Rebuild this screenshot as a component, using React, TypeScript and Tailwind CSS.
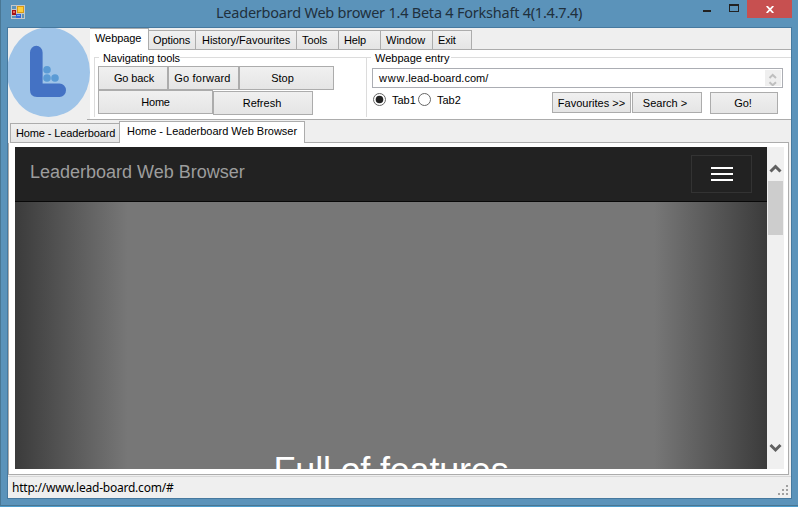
import type { ReactNode } from "react";

const face = "border border-[#acacac] bg-linear-to-b from-[#f0f0f0] to-[#e5e5e5]";

function Button({ className, children }: { className: string; children: ReactNode }) {
  return (
    <button className={`${face} flex shrink-0 items-center justify-center whitespace-nowrap ${className}`}>
      {children}
    </button>
  );
}

function MenuTab({ className, children }: { className: string; children: ReactNode }) {
  return (
    <div className={`${face} flex h-5 shrink-0 items-center border-l-0 whitespace-nowrap ${className}`}>
      {children}
    </div>
  );
}

function TitleBar() {
  return (
    <header className="flex h-[27px] shrink-0 items-start">
      <svg className="mt-[5px] ml-[10px] shrink-0" width="14" height="14" viewBox="0 0 14 14" shapeRendering="crispEdges">
        <rect width="14" height="14" fill="#c5c8c8" />
        <path d="M1 1h4v3H1zM1 11h4v2H1zM11 9h2v4h-2z" fill="#5b93ba" />
        <rect x="6" y="1" width="7" height="7" fill="#d99a14" />
        <rect x="7" y="2" width="5" height="5" fill="#ffce3c" />
        <rect x="1" y="5" width="4" height="5" fill="#a51316" />
        <rect x="2" y="6" width="2" height="2" fill="#e86a58" />
        <rect x="5" y="9" width="5" height="4" fill="#3465d8" />
        <rect x="6" y="10" width="3" height="1" fill="#82a8fa" />
      </svg>
      <h1 className="ml-[191px] w-[370px] shrink-0 font-['Noto_Sans','Open_Sans',sans-serif] text-[14.5px] leading-[25px] tracking-[-0.23px] whitespace-nowrap text-[#1f303d]">
        Leaderboard Web brower 1.4 Beta 4 Forkshaft 4(1.4.7.4)
      </h1>
      <div className="mt-2.5 ml-[117px] h-0.5 w-2 shrink-0 bg-[#222]" />
      <div className="mt-1 ml-[18px] h-2 w-2.5 shrink-0 border border-t-2 border-[#222]" />
      <div className="ml-2 flex h-[18px] w-[45px] shrink-0 items-center justify-center bg-[#c75050]">
        <svg width="8" height="7" viewBox="0 0 8 7">
          <path d="M.7 0 7.3 7M7.3 0 .7 7" stroke="white" strokeWidth="1.8" />
        </svg>
      </div>
    </header>
  );
}

function Logo() {
  return (
    <svg className="shrink-0" width="82" height="91" viewBox="0 0 82 91">
      <ellipse cx="40.5" cy="44.2" rx="41.5" ry="44.8" fill="#9fc4e8" />
      <path
        d="M22 24.5a6.3 6.8 0 0 1 12.6 0V55.5H51.500a6.500 6.800 0 0 1 0 13.600H29q-7 0-7-7z"
        fill="#4472c4"
      />
      <circle cx="39" cy="41.700" r="3.800" fill="#5b9bd5" />
      <circle cx="39" cy="50" r="3.800" fill="#5b9bd5" />
      <circle cx="47" cy="50" r="3.800" fill="#5b9bd5" />
    </svg>
  );
}

function Legend({ className, children }: { className: string; children: ReactNode }) {
  return (
    <div className="flex h-3 items-center whitespace-nowrap">
      <div className="-mt-0.5 h-px w-[5px] shrink-0 bg-[#dcdcdc]" />
      <span className={`shrink-0 pl-1 ${className}`}>{children}</span>
      <div className="-mt-0.5 h-px grow bg-[#dcdcdc]" />
    </div>
  );
}

function Radio({ checked, label, className }: { checked?: boolean; label: string; className: string }) {
  return (
    <label className={`flex shrink-0 items-center ${className}`}>
      <svg className="mr-1.5 shrink-0" width="14" height="14" viewBox="0 0 14 14">
        <circle cx="7.5" cy="6.5" r="6" fill="white" stroke="#666" />
        {checked && <circle cx="7.5" cy="6.5" r="3.8" fill="#222" />}
      </svg>
      {label}
    </label>
  );
}

function Toolbar() {
  return (
    <div className="flex h-[93px] shrink-0">
      <Logo />
      <div className="flex min-w-0 grow flex-col">
        <nav className="flex h-[22px] shrink-0 items-end">
          <div className="flex h-[22px] w-[59px] shrink-0 items-start border-t border-r border-[#acacac] bg-white pt-px pl-[5px] tracking-[-0.08px]">Webpage</div>
          <MenuTab className="w-[47px] pl-1 tracking-[-0.1px]">Options</MenuTab>
          <MenuTab className="w-[101px] pl-1.5 tracking-[-0.02px]">History/Favourites</MenuTab>
          <MenuTab className="w-[42px] pl-[5px] tracking-[-0.1px]">Tools</MenuTab>
          <MenuTab className="w-[42px] pl-[5px] tracking-[-0.2px]">Help</MenuTab>
          <MenuTab className="w-[52px] pl-[5px]">Window</MenuTab>
          <MenuTab className="w-[39px] pl-[5px] tracking-[-0.2px]">Exit</MenuTab>
          <div className="h-px grow bg-[#acacac]" />
        </nav>
        <div className="flex h-[69px] bg-white">
          <section className="ml-1 flex w-[272px] shrink-0 flex-col pt-0.5">
            <Legend className="w-[80px] tracking-[-0.08px]">Navigating tools</Legend>
            <div className="-mt-[7px] flex h-[60px] shrink-0 flex-col border-l border-[#dcdcdc] pt-[9px] pl-[3px]">
              <div className="flex shrink-0">
                <Button className="h-6 w-[70px] pl-0.5 tracking-[-0.12px]">Go back</Button>
                <Button className="h-6 w-[71px] pr-0.5 tracking-[0.2px]">Go forward</Button>
                <Button className="h-6 w-[95px] pr-2">Stop</Button>
              </div>
              <div className="flex shrink-0">
                <Button className="h-6 w-[115px] tracking-[-0.2px]">Home</Button>
                <Button className="mt-px h-6 w-[100px] pr-0.5">Refresh</Button>
              </div>
            </div>
          </section>
          <section className="flex min-w-0 grow flex-col pt-0.5">
            <Legend className="w-[80px]">Webpage entry</Legend>
            <div className="-mt-[7px] h-[60px] shrink-0 border-l border-[#dcdcdc] pt-[11px] pl-[5px]">
              <div className="flex h-5 w-[411px] items-center justify-between border border-[#abadb3] bg-white pr-px pl-1.5">
                <span className="tracking-[0.04px]"><span className="tracking-[0.8px]">www</span>.lead-board.com/</span>
                <svg width="16" height="16" viewBox="0 0 16 16">
                  <rect width="16" height="16" fill="#efefef" />
                  <path d="m4.5 8 3.2-3.1L11 8M4.5 12.2l3.2 3L11 12.2" fill="none" stroke="#bfbfbf" strokeWidth="2" />
                </svg>
              </div>
              <div className="flex items-start pt-1">
                <Radio checked label="Tab1" className="h-4 w-[45px]" />
                <Radio label="Tab2" className="h-4 w-[45px]" />
                <Button className="ml-[90px] h-[21px] w-[79px]">Favourites &gt;&gt;</Button>
                <Button className="ml-px h-[21px] w-[70px] pr-1">Search &gt;</Button>
                <Button className="ml-2 h-[22px] w-[68px] pr-0.5">Go!</Button>
              </div>
            </div>
          </section>
        </div>
        <div className="-ml-[3px] h-px shrink-0 bg-[#acacac]" />
      </div>
    </div>
  );
}

function WebPage() {
  return (
    <div className="flex h-[322px] w-[752px] shrink-0 flex-col overflow-hidden">
      <div className="flex h-[55px] shrink-0 items-start justify-between border-b border-[#080808] bg-[#222] pt-2 pr-[15px] pl-[15px]">
        <span className="text-[18px] leading-[34px] text-[#9d9d9d]">Leaderboard Web Browser</span>
        <div className="flex h-[38px] w-[61px] flex-col items-center justify-center gap-1 border border-[#333]">
          <div className="h-0.5 w-[22px] bg-white" />
          <div className="h-0.5 w-[22px] bg-white" />
          <div className="h-0.5 w-[22px] bg-white" />
        </div>
      </div>
      <main className="h-[267px] shrink-0 overflow-hidden bg-[linear-gradient(to_right,#3b3b3b,#777_15%,#777_85%,#3b3b3b)] pt-[249px] text-center text-[36px] leading-[40px] tracking-[-0.2px] whitespace-nowrap text-white">
        Full of features
      </main>
    </div>
  );
}

function ScrollBar() {
  return (
    <div className="flex h-[322px] w-[17px] shrink-0 flex-col items-center bg-[#f0f0f0]">
      <svg className="mt-4 shrink-0" width="13" height="18" viewBox="0 0 13 18">
        <path d="m1.500 8.500 5-5 5 5" fill="none" stroke="#606060" strokeWidth="3" />
      </svg>
      <div className="h-[54px] w-[15px] shrink-0 bg-[#cdcdcd]" />
      <div className="grow" />
      <svg className="mb-4 shrink-0" width="13" height="10" viewBox="0 0 13 10">
        <path d="m1.500 2 5 5 5-5" fill="none" stroke="#606060" strokeWidth="3" />
      </svg>
    </div>
  );
}

function StatusBar() {
  return (
    <footer className="mt-px flex h-[22px] shrink-0 items-end justify-between border-t border-[#d7d7d7] pr-0.5 pl-1">
      <span className="font-['Noto_Sans','Open_Sans',sans-serif] text-[12px] leading-[21px] tracking-[-0.23px]">http://www.lead-board.com/#</span>
      <svg className="mb-0.5" width="11" height="11" fill="#a0a0a0" shapeRendering="crispEdges">
        <path d="M8 0h2v2H8zM4 4h2v2H4zM8 4h2v2H8zM0 8h2v2H0zM4 8h2v2H4zM8 8h2v2H8z" />
      </svg>
    </footer>
  );
}

export default function App() {
  return (
    <div className="flex h-[507px] w-[798px] flex-col overflow-hidden bg-[#4d9ccc] font-['Liberation_Sans',Arial,sans-serif] text-[11px] leading-4 text-black">
      <div className="flex h-[506px] shrink-0 flex-col border-b border-l border-[#497794] bg-[#5b93ba]">
        <TitleBar />
        <div className="ml-1.5 flex h-[472px] w-[785px] shrink-0 flex-col border border-[#46799f] bg-[#efefef]">
          <Toolbar />
          <div className="flex h-[22px] shrink-0 items-end pl-0.5">
            <div className={`${face} flex h-5 w-[109px] shrink-0 items-center border-r-0 pl-[5px] tracking-[-0.13px] whitespace-nowrap`}>
              Home - Leaderboard
            </div>
            <div className="flex h-[22px] w-[186px] shrink-0 items-start border border-b-0 border-[#acacac] bg-white pt-px pl-[7px] tracking-[-0.01px] whitespace-nowrap">
              Home - Leaderboard Web Browser
            </div>
            <div className="mr-0.5 h-px grow bg-[#acacac]" />
          </div>
          <div className="mr-0.5 flex h-[332px] shrink-0 border-r border-b border-l border-[#acacac] bg-white pt-1 pl-1.5">
            <WebPage />
            <ScrollBar />
          </div>
          <StatusBar />
        </div>
      </div>
    </div>
  );
}
